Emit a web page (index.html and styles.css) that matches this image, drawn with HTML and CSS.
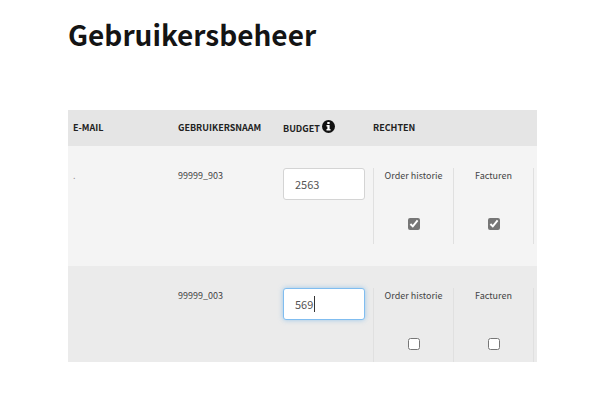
FILE: index.html
```html
<!DOCTYPE html>
<html lang="nl">
<head>
    <meta charset="UTF-8">
    <meta name="viewport" content="width=device-width, initial-scale=1.0">
    <title>Gebruikersbeheer</title>
    <link rel="stylesheet" href="styles.css">
</head>
<body>
    <div class="container">
        <h1>Gebruikersbeheer</h1>
        <table class="users">
            <thead>
                <tr>
                    <th class="col-email">E-mail</th>
                    <th class="col-name">Gebruikersnaam</th>
                    <th class="col-budget">
                        Budget
                        <svg class="info" viewBox="0 0 16 16" aria-hidden="true">
                            <circle cx="8" cy="8" r="8" fill="#111"/>
                            <path d="M6.5 2.6h2.9v2.4H6.5zM5.5 6.2h3.9v5h1.1v1.8h-5v-1.8h1.1V8H5.5z" fill="#fff"/>
                        </svg>
                    </th>
                    <th>Rechten</th>
                </tr>
            </thead>
            <tbody>
                <tr>
                    <td class="email">.</td>
                    <td>99999_903</td>
                    <td class="budget">
                        <div class="field">
                            <input type="text" class="amount" value="2563" aria-label="Budget 99999_903">
                        </div>
                    </td>
                    <td class="rights-cell">
                        <div class="rights">
                            <label class="right">Order historie <input type="checkbox" checked></label>
                            <label class="right">Facturen <input type="checkbox" checked></label>
                        </div>
                    </td>
                </tr>
                <tr>
                    <td class="email"></td>
                    <td>99999_003</td>
                    <td class="budget">
                        <div class="field editing">
                            <input type="text" class="amount" value="569" aria-label="Budget 99999_003">
                        </div>
                    </td>
                    <td class="rights-cell">
                        <div class="rights">
                            <label class="right">Order historie <input type="checkbox"></label>
                            <label class="right">Facturen <input type="checkbox"></label>
                        </div>
                    </td>
                </tr>
            </tbody>
        </table>
    </div>
</body>
</html>
```
FILE: styles.css
```css
body {
    font-family: "Noto Sans CJK SC", "Noto Sans", sans-serif;
    font-size: 9px;
    line-height: 16px;
    background-color: #fff;
    margin: 0;
    color: #444;
}
.container {
    margin: 0 63px 0 68px;
    padding-top: 14px;
}
h1 {
    font-size: 28px;
    line-height: 40px;
    color: #141414;
    margin: 0 0 56px;
}
.users {
    width: 100%;
    table-layout: fixed;
    border-collapse: collapse;
}
.users th {
    height: 36px;
    padding: 0 5px;
    background: #e5e5e5;
    color: #222;
    text-align: left;
    text-transform: uppercase;
    white-space: nowrap;
}
.users .col-email,
.users .col-name {
    width: 95px;
}
.users .col-budget {
    width: 80px;
}
.info {
    width: 13px;
    height: 13px;
    vertical-align: -1px;
}
.users td {
    padding: 22px 5px;
    background: #f4f4f4;
    vertical-align: top;
}
.users tr:last-child td {
    padding-bottom: 0;
    background: #ebebeb;
}
.users .email {
    color: #999;
}
.users .rights-cell {
    padding-right: 0;
}
.field {
    position: relative;
    width: 82px;
}
.amount {
    display: block;
    box-sizing: border-box;
    width: 100%;
    height: 32px;
    padding: 0 11px 1px;
    border: 1px solid #d4d4d4;
    border-radius: 3px;
    background: #fff;
    font-family: inherit;
    font-size: 11px;
    color: #555;
    outline: none;
}
.amount:focus,
.editing .amount {
    border-color: #80bdf0;
    box-shadow: 0 0 5px rgba(102, 175, 233, 0.6);
}
/* text cursor behind the amount */
.editing::after {
    content: "";
    position: absolute;
    left: 31px;
    top: 8px;
    width: 1px;
    height: 16px;
    background: #333;
}
.rights {
    display: flex;
    width: 161px;
    box-sizing: border-box;
    border-right: 1px solid #e0e0e0;
}
.right {
    display: flex;
    flex-direction: column;
    align-items: center;
    gap: 34px;
    flex: 1;
    height: 76px;
    box-sizing: border-box;
    border-left: 1px solid #e0e0e0;
    white-space: nowrap;
}
tr:last-child .right {
    height: 74px;
}
.right input {
    width: 12px;
    height: 12px;
    margin: 0;
    accent-color: #767676;
}
```
